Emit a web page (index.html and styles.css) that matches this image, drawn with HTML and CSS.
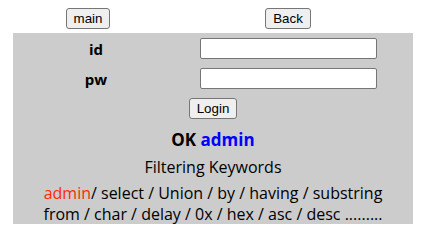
FILE: index.html
```html
<!DOCTYPE html>
<html lang="ko">
<head>
    <meta charset="UTF-8">
    <meta name="viewport" content="width=device-width, initial-scale=1.0">
    <title>Login</title>
    <link rel="stylesheet" href="styles.css">
</head>
<body>
    <div class="wrap">
        <div class="top-row">
            <div class="cell"><button class="btn">main</button></div>
            <div class="cell"><button class="btn">Back</button></div>
        </div>

        <div class="panel">
            <form class="login-form" onsubmit="return false">
                <div class="field">
                    <label class="field-label" for="uid">id</label>
                    <input class="field-input" type="text" id="uid" name="id">
                </div>
                <div class="field">
                    <label class="field-label" for="upw">pw</label>
                    <input class="field-input" type="password" id="upw" name="pw">
                </div>
                <div class="submit-row">
                    <button class="btn" type="submit">Login</button>
                </div>
            </form>

            <h3 class="result">OK <span class="user">admin</span></h3>

            <p class="filter-title">Filtering Keywords</p>
            <p class="filter-list">
                <span class="hit">admin</span>/ select / Union / by / having / substring
                from / char / delay / 0x / hex / asc / desc .........
            </p>
        </div>
    </div>
</body>
</html>
```

FILE: styles.css
```css
body {
    margin: 8px;
    background: #FFFFFF;
    color: #000000;
    font-family: 'Open Sans', 'Noto Sans CJK KR', sans-serif;
}

.wrap {
    width: 400px;
    margin: 0 auto;
}

.top-row {
    display: grid;
    grid-template-columns: 150px 250px;
    height: 25px;
}

.top-row .cell {
    display: flex;
    justify-content: center;
    align-items: flex-start;
}

.btn {
    font-family: 'Liberation Sans', Arial, sans-serif;
    font-size: 13.33px;
    height: 21px;
    padding: 1px 7px;
    margin: 0;
    background: #EFEFEF;
    color: #000000;
    border: 1px solid #767676;
    border-radius: 3px;
}

.panel {
    background: #CCCCCC;
    padding: 5px 0 0;
    height: 191px;
    box-sizing: border-box;
    text-align: center;
}

.field {
    display: grid;
    grid-template-columns: 166px 1fr;
    align-items: center;
    height: 21px;
    margin-bottom: 9px;
    text-align: left;
}

.field-label {
    text-align: center;
    font-weight: bold;
    font-size: 15px;
}

.field-input {
    margin: 0 0 0 21px;
    width: 177px;
    height: 21px;
    box-sizing: border-box;
    padding: 1px 2px;
    border: 1px solid #767676;
    border-radius: 2px;
    background: #FFFFFF;
    font-size: 13.33px;
}

.submit-row {
    display: flex;
    justify-content: center;
    align-items: flex-start;
    height: 21px;
}

.result {
    margin: 10px 0 0;
    font-size: 17px;
    line-height: 22px;
    font-weight: bold;
}

.user {
    color: #0000FF;
}

.filter-title {
    margin: 5px 0 0;
    font-size: 16px;
    line-height: 22px;
}

.filter-list {
    margin: 5px 0 0;
    font-size: 16px;
    line-height: 21px;
    padding: 0 20px;
}

.hit {
    color: #FF2A00;
}
```
